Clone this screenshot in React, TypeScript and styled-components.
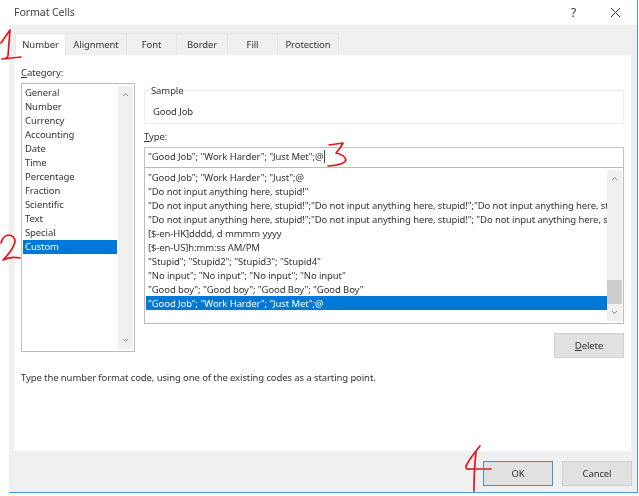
import styled, { createGlobalStyle } from 'styled-components'

const categories = ['General', 'Number', 'Currency', 'Accounting', 'Date', 'Time', 'Percentage', 'Fraction', 'Scientific', 'Text', 'Special', 'Custom']

const tabs = [
    { label: 'Number', width: 51 },
    { label: 'Alignment', width: 61 },
    { label: 'Font', width: 50 },
    { label: 'Border', width: 51 },
    { label: 'Fill', width: 50 },
    { label: 'Protection', width: 61 },
]

const formats = [
    '"Good Job"; "Work Harder"; "Just";@',
    '"Do not input anything here, stupid!"',
    '"Do not input anything here, stupid!";"Do not input anything here, stupid!";"Do not input anything here, stupid!"',
    '"Do not input anything here, stupid!";"Do not input anything here, stupid!"; "Do not input anything here, stupid!"',
    '[$-en-HK]dddd, d mmmm yyyy',
    '[$-en-US]h:mm:ss AM/PM',
    '"Stupid"; "Stupid2"; "Stupid3"; "Stupid4"',
    '"No input"; "No input"; "No input"; "No input"',
    '"Good boy"; "Good boy"; "Good Boy"; "Good Boy"',
    '"Good Job"; "Work Harder"; "Just Met";@',
]

const Chevron = ({ up }: { up?: boolean }) => (
    <svg width="7" height="5" viewBox="0 0 7 5">
        <path d={up ? 'M1 4 L3.5 1.5 L6 4' : 'M1 1 L3.5 3.5 L6 1'} fill="none" stroke="#8a8a8a" strokeWidth="1" />
    </svg>
)

export default function App() {
    return (
        <>
            <GlobalStyle />
            <StyledWindow>
                <TitleBar>
                    <span>Format Cells</span>
                    <TitleIcons>
                        <HelpMark>?</HelpMark>
                        <svg width="11" height="11" viewBox="0 0 11 11">
                            <path d="M1 1 L10 10 M10 1 L1 10" stroke="#333" strokeWidth="1" fill="none" />
                        </svg>
                    </TitleIcons>
                </TitleBar>

                <TabStrip>
                    {tabs.map((tab, i) => (
                        <Tab key={tab.label} $active={i === 0} $width={tab.width}>{tab.label}</Tab>
                    ))}
                </TabStrip>

                <Page>
                    <Columns>
                        <LeftColumn>
                            <FieldLabel><u>C</u>ategory:</FieldLabel>
                            <CategoryList>
                                <CategoryItems>
                                    {categories.map(c => (
                                        <CategoryItem key={c} $selected={c === 'Custom'}>{c}</CategoryItem>
                                    ))}
                                </CategoryItems>
                                <ScrollBar>
                                    <ScrollButton><Chevron up /></ScrollButton>
                                    <ScrollButton><Chevron /></ScrollButton>
                                </ScrollBar>
                            </CategoryList>
                        </LeftColumn>

                        <RightColumn>
                            <SampleGroup>
                                <Legend>Sample</Legend>
                                <SampleText>Good Job</SampleText>
                            </SampleGroup>
                            <TypeLabel><u>T</u>ype:</TypeLabel>
                            <TypeInput>
                                "Good Job"; "Work Harder"; "Just Met";@<Caret />
                            </TypeInput>
                            <FormatList>
                                <FormatRows>
                                    {formats.map((f, i) => (
                                        <FormatRow key={f} $selected={i === formats.length - 1}>{f}</FormatRow>
                                    ))}
                                </FormatRows>
                                <ScrollBar>
                                    <ScrollButton><Chevron up /></ScrollButton>
                                    <ScrollThumb />
                                    <ScrollButton><Chevron /></ScrollButton>
                                </ScrollBar>
                            </FormatList>
                            <DeleteRow>
                                <DeleteButton><u>D</u>elete</DeleteButton>
                            </DeleteRow>
                        </RightColumn>
                    </Columns>
                    <Description>Type the number format code, using one of the existing codes as a starting point.</Description>
                </Page>

                <Footer>
                    <OkButton>OK</OkButton>
                    <FooterButton>Cancel</FooterButton>
                </Footer>
            </StyledWindow>

            {/* the red pen marks drawn over the screenshot */}
            <Annotations width="639" height="496" viewBox="0 0 639 496">
                <path d="M1 43 L10 30 L8 56 Q7 59 2 59 L21 57" />
                <path d="M1 243 Q3 236 8 235 Q15 235 15 242 Q13 250 3 260 Q10 256 20 258" />
                <path d="M329 145 L343 143 Q340 149 336 153 Q345 155 346 160 Q344 165 328 166" />
                <path d="M480 446 Q470 458 466 466 Q465 470 471 469 L491 469" />
                <path d="M476 452 Q474 470 474 491" />
            </Annotations>
        </>
    )
}

const GlobalStyle = createGlobalStyle`
    html, body {
        margin: 0;
        background: #fff;
    }
    body {
        width: 639px;
        height: 496px;
        overflow: hidden;
        font-family: "Noto Sans", "Open Sans", sans-serif;
        font-size: 9.5px;
        letter-spacing: -0.1px;
        color: #333;
    }
    #root {
        position: relative;
    }
    u {
        text-underline-offset: 1px;
    }
`

const StyledWindow = styled.div`
    box-sizing: border-box;
    margin-left: 9px;
    width: 629px;
    height: 493px;
    display: flex;
    flex-direction: column;
    background: #f0f0f0;
    border-right: 1px solid #4a9ae0;
    border-bottom: 1px solid #4a9ae0;
    filter: blur(0.35px);
`

const TitleBar = styled.div`
    height: 25px;
    flex: none;
    margin-left: -9px;
    padding: 0 16px 1px 14px;
    box-sizing: border-box;
    display: flex;
    align-items: center;
    justify-content: space-between;
    background: #fff;
    font-size: 10.6px;
    color: #444;
`

const TitleIcons = styled.div`
    display: flex;
    align-items: center;
    gap: 34px;
`

const HelpMark = styled.span`
    font-size: 12px;
    color: #333;
`

const TabStrip = styled.div`
    height: 30px;
    flex: none;
    padding-left: 6px;
    display: flex;
    align-items: flex-end;
`

const Tab = styled.div<{ $active: boolean; $width: number }>`
    box-sizing: border-box;
    width: ${p => p.$width}px;
    height: ${p => (p.$active ? 23 : 22)}px;
    margin-bottom: ${p => (p.$active ? -1 : 0)}px;
    padding-bottom: 1px;
    display: flex;
    align-items: center;
    justify-content: center;
    background: ${p => (p.$active ? '#fff' : '#f0f0f0')};
    border: 1px solid #e6e6e6;
    border-bottom: none;
    border-left-width: ${p => (p.$active ? 1 : 0)}px;
    position: relative;
    z-index: ${p => (p.$active ? 1 : 0)};
`

const Page = styled.div`
    box-sizing: border-box;
    height: 396px;
    flex: none;
    margin: 0 6px 0 5px;
    padding: 11px 7px 0;
    background: #fff;
`

const Columns = styled.div`
    display: flex;
    gap: 9px;
`

const LeftColumn = styled.div`
    width: 114px;
    flex: none;
`

const FieldLabel = styled.div`
    height: 14px;
    line-height: 13px;
    margin-bottom: 3px;
`

const CategoryList = styled.div`
    box-sizing: border-box;
    height: 269px;
    padding: 2px 1px 2px 1px;
    display: flex;
    border: 1px solid #bcbcbc;
`

const CategoryItems = styled.div`
    flex: 1;
    min-width: 0;
`

const CategoryItem = styled.div<{ $selected: boolean }>`
    height: 14px;
    line-height: 13px;
    padding-left: 2px;
    margin-right: 1px;
    background: ${p => (p.$selected ? '#0078d7' : 'transparent')};
    color: ${p => (p.$selected ? '#fff' : '#333')};
`

const ScrollBar = styled.div`
    width: 15px;
    flex: none;
    display: flex;
    flex-direction: column;
    justify-content: space-between;
    background: #f0f0f0;
`

const ScrollButton = styled.div`
    height: 17px;
    flex: none;
    display: flex;
    align-items: center;
    justify-content: center;
`

const ScrollThumb = styled.div`
    height: 24px;
    margin-top: auto;
    background: #cdcdcd;
`

const RightColumn = styled.div`
    flex: 1;
    min-width: 0;
    padding-top: 24px;
`

const SampleGroup = styled.div`
    box-sizing: border-box;
    height: 34px;
    padding: 14px 0 0 8px;
    position: relative;
    border: 1px solid #eeeeee;
`

const Legend = styled.span`
    position: absolute;
    top: -7px;
    left: 5px;
    padding: 0 1px;
    line-height: 14px;
    background: #fff;
`

const SampleText = styled.div`
    line-height: 13px;
`

const TypeLabel = styled.div`
    height: 14px;
    line-height: 14px;
    margin: 6px 0 3px;
`

const TypeInput = styled.div`
    box-sizing: border-box;
    height: 21px;
    padding: 0 0 2px 3px;
    display: flex;
    align-items: center;
    white-space: pre;
    border: 1px solid #c4c4c4;
`

const Caret = styled.i`
    width: 1px;
    height: 13px;
    margin-left: 1px;
    background: #444;
`

const FormatList = styled.div`
    box-sizing: border-box;
    height: 157px;
    margin-top: -1px;
    padding: 2px 1px 2px 1px;
    display: flex;
    border: 1px solid #bcbcbc;
`

const FormatRows = styled.div`
    flex: 1;
    min-width: 0;
    overflow: hidden;
`

const FormatRow = styled.div<{ $selected: boolean }>`
    height: 14px;
    line-height: 16px;
    padding-left: 2px;
    white-space: pre;
    overflow: hidden;
    background: ${p => (p.$selected ? '#0078d7' : 'transparent')};
    color: ${p => (p.$selected ? '#fff' : '#333')};
`

const DeleteRow = styled.div`
    margin-top: 9px;
    display: flex;
    justify-content: flex-end;
`

const DeleteButton = styled.div`
    box-sizing: border-box;
    width: 70px;
    height: 25px;
    display: flex;
    align-items: center;
    justify-content: center;
    white-space: pre;
    background: #e1e1e1;
    border: 1px solid #d0d0d0;
`

const Description = styled.div`
    margin-top: 13px;
    line-height: 14px;
`

const Footer = styled.div`
    flex: 1;
    padding: 10px 5px 0 0;
    display: flex;
    justify-content: flex-end;
    align-items: flex-start;
    gap: 9px;
`

const FooterButton = styled.div`
    box-sizing: border-box;
    width: 70px;
    height: 25px;
    padding-bottom: 1px;
    display: flex;
    align-items: center;
    justify-content: center;
    background: #e1e1e1;
    border: 1px solid #cfcfcf;
`

const OkButton = styled(FooterButton)`
    border-color: #3f95dd;
`

const Annotations = styled.svg`
    position: absolute;
    top: 0;
    left: 0;
    pointer-events: none;
    fill: none;
    stroke: #e8141c;
    stroke-width: 1.7;
    stroke-linecap: round;
    stroke-linejoin: round;
`
